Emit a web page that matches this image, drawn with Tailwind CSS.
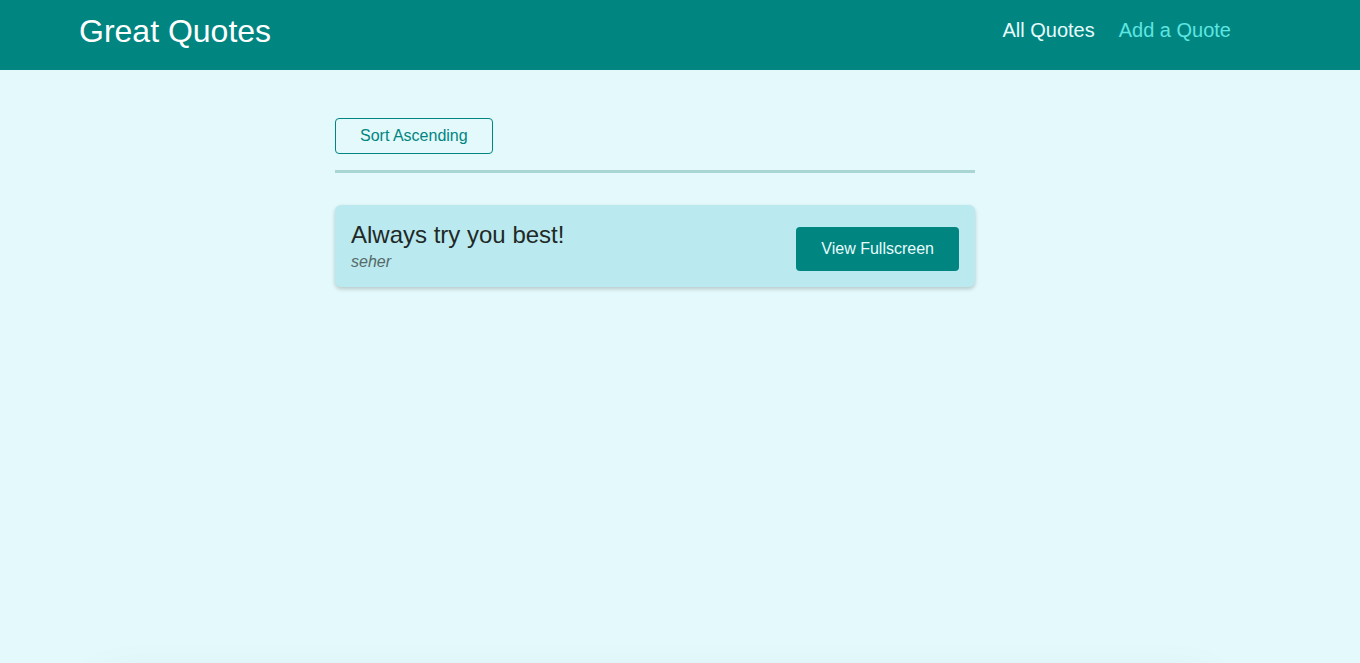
<!DOCTYPE html>
<html lang="en">
<head>
<meta charset="utf-8">
<meta name="viewport" content="width=device-width, initial-scale=1">
<title>Great Quotes</title>
<script src="https://cdn.jsdelivr.net/npm/@tailwindcss/browser@4"></script>
</head>
<body class="bg-[#e3f9fb] font-['Liberation_Sans',Arial,sans-serif] text-base text-[#1f2926]">
  <div class="flex min-h-screen flex-col">
    <header class="flex h-[70px] items-start justify-between bg-[#008581] pr-[129px] pl-[79px]">
      <h1 class="pt-[7px] text-[32px] leading-12 text-white">Great Quotes</h1>
      <nav class="pt-4">
        <ul class="flex gap-6 text-xl leading-7">
          <li><a href="#quotes" class="text-[#e6fcfc]">All Quotes</a></li>
          <li><a href="#new" class="text-[#5ee6e1]">Add a Quote</a></li>
        </ul>
      </nav>
    </header>
    <main id="quotes" class="grow pt-12 pr-[50px]">
      <div class="mx-auto max-w-[640px]">
        <div class="border-b-3 border-[#a9d6d5] pb-4">
          <button type="button" class="block h-9 rounded-sm border border-[#008581] px-6 text-base leading-6 text-[#008581]">Sort Ascending</button>
        </div>
        <ul class="mt-8">
          <li class="flex items-end justify-between rounded-md bg-[#bae9f0] p-4 shadow-[0_2px_4px_rgba(0,0,0,0.2)]">
            <figure>
              <blockquote class="text-2xl leading-7">Always try you best!</blockquote>
              <figcaption class="pt-1 text-base leading-[18px] text-[#566967] italic">seher</figcaption>
            </figure>
            <a href="#fullscreen" class="block rounded-sm bg-[#008581] px-[25px] py-2.5 text-base leading-6 text-[#e8fcfc]">View Fullscreen</a>
          </li>
        </ul>
      </div>
    </main>
    <div class="h-10 overflow-hidden pt-10 pr-[150px] pl-[100px]" aria-hidden="true">
      <div class="h-12 translate-y-5 shadow-[0_0_48px_rgba(0,60,40,0.08)]"></div>
    </div>
  </div>
</body>
</html>
